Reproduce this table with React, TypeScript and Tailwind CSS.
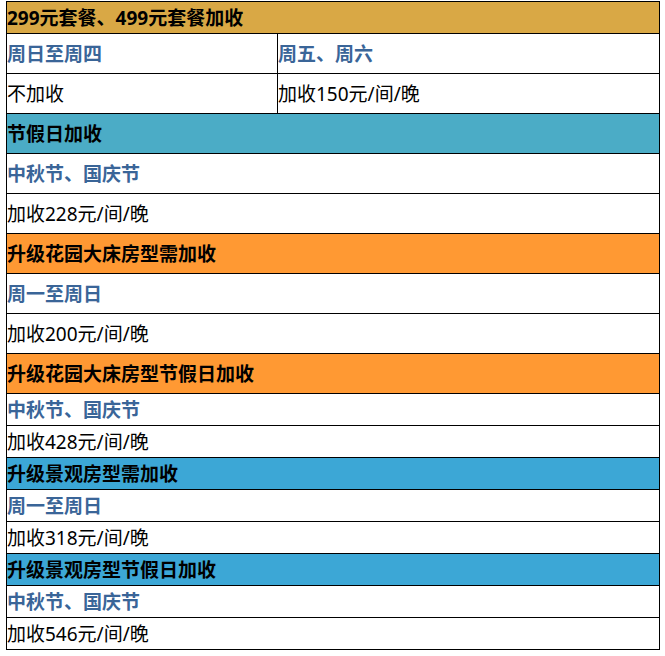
import React from "react";

type Row =
  | { kind: "head"; text: string; bg: string; h: string }
  | { kind: "sub"; text: string; h: string }
  | { kind: "val"; text: string; h: string };

const rows: Row[] = [
  { kind: "head", text: "节假日加收", bg: "bg-[#4bacc6]", h: "h-[40px]" },
  { kind: "sub", text: "中秋节、国庆节", h: "h-[40px]" },
  { kind: "val", text: "加收228元/间/晚", h: "h-[40px]" },
  { kind: "head", text: "升级花园大床房型需加收", bg: "bg-[#ff9933]", h: "h-[40px]" },
  { kind: "sub", text: "周一至周日", h: "h-[40px]" },
  { kind: "val", text: "加收200元/间/晚", h: "h-[40px]" },
  { kind: "head", text: "升级花园大床房型节假日加收", bg: "bg-[#ff9933]", h: "h-[40px]" },
  { kind: "sub", text: "中秋节、国庆节", h: "h-[32px]" },
  { kind: "val", text: "加收428元/间/晚", h: "h-[32px]" },
  { kind: "head", text: "升级景观房型需加收", bg: "bg-[#3ca7d6]", h: "h-[32px]" },
  { kind: "sub", text: "周一至周日", h: "h-[32px]" },
  { kind: "val", text: "加收318元/间/晚", h: "h-[32px]" },
  { kind: "head", text: "升级景观房型节假日加收", bg: "bg-[#3ca7d6]", h: "h-[32px]" },
  { kind: "sub", text: "中秋节、国庆节", h: "h-[32px]" },
  { kind: "val", text: "加收546元/间/晚", h: "h-[32px]" },
];

function Cell({ row }: { row: Row }) {
  if (row.kind === "head") {
    return (
      <div className={`flex items-center border-b border-black pt-[2px] ${row.h} ${row.bg} font-bold text-black`}>
        {row.text}
      </div>
    );
  }
  if (row.kind === "sub") {
    return (
      <div className={`flex items-center border-b border-black pt-[2px] ${row.h} bg-white font-bold text-[#3a6598]`}>
        {row.text}
      </div>
    );
  }
  return (
    <div className={`flex items-center border-b border-black pt-[2px] ${row.h} bg-white text-black`}>
      {row.text}
    </div>
  );
}

export default function App() {
  return (
    <div className="min-h-[656px] w-[665px] bg-white pt-[1px] pl-[6px]">
      <div
        className="w-[654px] border-x border-t border-black text-[19px] leading-none"
        style={{ fontFamily: '"Noto Sans", "Noto Sans CJK SC", sans-serif' }}
      >
        <div className="flex h-[32px] items-center border-b border-black bg-[#d9a845] pt-[2px] font-bold text-black">
          299元套餐、499元套餐加收
        </div>
        <div className="flex h-[40px] border-b border-black bg-white font-bold text-[#3a6598]">
          <div className="flex w-[271px] items-center border-r border-black pt-[2px]">周日至周四</div>
          <div className="flex flex-1 items-center pt-[2px]">周五、周六</div>
        </div>
        <div className="flex h-[40px] border-b border-black bg-white text-black">
          <div className="flex w-[271px] items-center border-r border-black pt-[2px]">不加收</div>
          <div className="flex flex-1 items-center pt-[2px]">加收150元/间/晚</div>
        </div>
        {rows.map((r, i) => (
          <Cell key={i} row={r} />
        ))}
      </div>
    </div>
  );
}
